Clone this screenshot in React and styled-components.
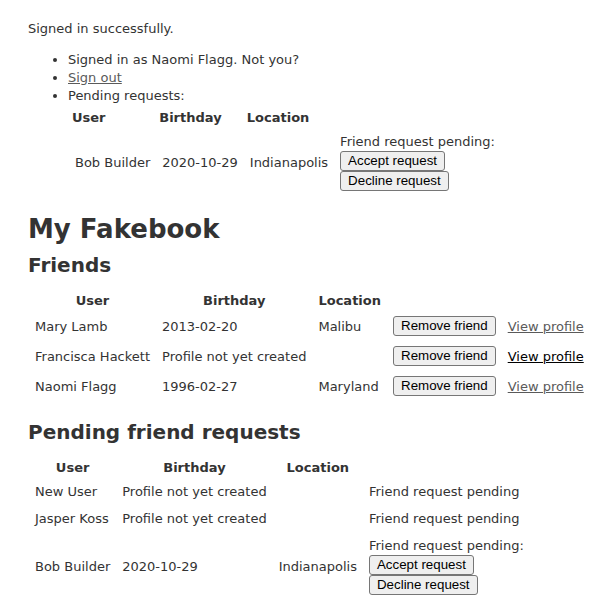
//Library Imports
import React from 'react'
import styled, { createGlobalStyle } from 'styled-components'

//Data
const topRequests = [
    { user: 'Bob Builder', birthday: '2020-10-29', location: 'Indianapolis' },
]

const friends = [
    { user: 'Mary Lamb', birthday: '2013-02-20', location: 'Malibu', active: false },
    { user: 'Francisca Hackett', birthday: 'Profile not yet created', location: '', active: true },
    { user: 'Naomi Flagg', birthday: '1996-02-27', location: 'Maryland', active: false },
]

const pending = [
    { user: 'New User', birthday: 'Profile not yet created', location: '', actions: false },
    { user: 'Jasper Koss', birthday: 'Profile not yet created', location: '', actions: false },
    { user: 'Bob Builder', birthday: '2020-10-29', location: 'Indianapolis', actions: true },
]

//Styles
const GlobalStyle = createGlobalStyle`
    body {
        margin: 0;
        background: #ffffff;
        color: #333333;
        font-family: Verdana, "DejaVu Sans", sans-serif;
        font-size: 13px;
        line-height: 18px;
    }
`
const PageStyle = styled.div`
    padding: 20px 28px 20px 28px;
`
const NoticeStyle = styled.p`
    margin: 0 0 13px 0;
`
const MenuStyle = styled.ul`
    margin: 0;
    padding-left: 40px;
`
const LinkStyle = styled.a`
    color: ${props => props.$active ? '#000000' : '#5a5a5a'};
    text-decoration: underline;
    cursor: pointer;
`
const TitleStyle = styled.h1`
    margin: 17px 0 9px 0;
    font-size: 26px;
    line-height: 30px;
    font-weight: bold;
    color: #333333;
`
const SubtitleStyle = styled.h2`
    margin: ${props => props.$spaced ? '18px' : '0'} 0 11px 0;
    font-size: 20px;
    line-height: 24px;
    font-weight: bold;
    color: #333333;
`
const TableStyle = styled.table`
    border-collapse: separate;
    border-spacing: 2px;
    font-size: 13px;
`
const HeadCellStyle = styled.th`
    padding: 2px ${props => props.$left ? '2px' : '5px'} 1px;
    text-align: ${props => props.$left ? 'left' : 'center'};
    line-height: 17px;
    font-weight: bold;
`
const CellStyle = styled.td`
    padding: 4px 5px;
    line-height: 17px;
    text-align: left;
    vertical-align: middle;
    white-space: nowrap;
`
const ButtonStyle = styled.button`
    display: block;
    box-sizing: border-box;
    height: 20px;
    margin: 0;
    padding: 0 7px;
    font-family: Arial, "Liberation Sans", sans-serif;
    font-size: 13.33px;
    line-height: 16px;
    color: #000000;
    background: #efefef;
    border: 1px solid #767676;
    border-radius: 3px;
    cursor: pointer;
`
const PendingLabelStyle = styled.div`
    margin-bottom: 1px;
`

//Components
function RequestActions() {
    return (
        <>
            <PendingLabelStyle>Friend request pending:</PendingLabelStyle>
            <ButtonStyle>Accept request</ButtonStyle>
            <ButtonStyle>Decline request</ButtonStyle>
        </>
    )
}

function TopRequests() {
    return (
        <TableStyle>
            <thead>
                <tr>
                    <HeadCellStyle $left>User</HeadCellStyle>
                    <HeadCellStyle $left>Birthday</HeadCellStyle>
                    <HeadCellStyle $left>Location</HeadCellStyle>
                    <HeadCellStyle $left></HeadCellStyle>
                </tr>
            </thead>
            <tbody>
                { topRequests.map(r => (
                    <tr key={ r.user }>
                        <CellStyle>{ r.user }</CellStyle>
                        <CellStyle>{ r.birthday }</CellStyle>
                        <CellStyle>{ r.location }</CellStyle>
                        <CellStyle><RequestActions /></CellStyle>
                    </tr>
                )) }
            </tbody>
        </TableStyle>
    )
}

function FriendsTable() {
    return (
        <TableStyle>
            <thead>
                <tr>
                    <HeadCellStyle>User</HeadCellStyle>
                    <HeadCellStyle>Birthday</HeadCellStyle>
                    <HeadCellStyle>Location</HeadCellStyle>
                    <HeadCellStyle></HeadCellStyle>
                    <HeadCellStyle></HeadCellStyle>
                </tr>
            </thead>
            <tbody>
                { friends.map(f => (
                    <tr key={ f.user }>
                        <CellStyle>{ f.user }</CellStyle>
                        <CellStyle>{ f.birthday }</CellStyle>
                        <CellStyle>{ f.location }</CellStyle>
                        <CellStyle><ButtonStyle>Remove friend</ButtonStyle></CellStyle>
                        <CellStyle><LinkStyle $active={ f.active }>View profile</LinkStyle></CellStyle>
                    </tr>
                )) }
            </tbody>
        </TableStyle>
    )
}

function PendingTable() {
    return (
        <TableStyle>
            <thead>
                <tr>
                    <HeadCellStyle>User</HeadCellStyle>
                    <HeadCellStyle>Birthday</HeadCellStyle>
                    <HeadCellStyle>Location</HeadCellStyle>
                    <HeadCellStyle></HeadCellStyle>
                </tr>
            </thead>
            <tbody>
                { pending.map(p => (
                    <tr key={ p.user }>
                        <CellStyle>{ p.user }</CellStyle>
                        <CellStyle>{ p.birthday }</CellStyle>
                        <CellStyle>{ p.location }</CellStyle>
                        <CellStyle>
                            { p.actions ? <RequestActions /> : 'Friend request pending' }
                        </CellStyle>
                    </tr>
                )) }
            </tbody>
        </TableStyle>
    )
}

//Main Component
function App() {
    return (
        <PageStyle>
            <GlobalStyle />
            <NoticeStyle>Signed in successfully.</NoticeStyle>
            <MenuStyle>
                <li>Signed in as Naomi Flagg. Not you?</li>
                <li><LinkStyle>Sign out</LinkStyle></li>
                <li>
                    Pending requests:
                    <TopRequests />
                </li>
            </MenuStyle>

            <TitleStyle>My Fakebook</TitleStyle>
            <SubtitleStyle>Friends</SubtitleStyle>
            <FriendsTable />

            <SubtitleStyle $spaced>Pending friend requests</SubtitleStyle>
            <PendingTable />
        </PageStyle>
    )
}

//Export
export default App
